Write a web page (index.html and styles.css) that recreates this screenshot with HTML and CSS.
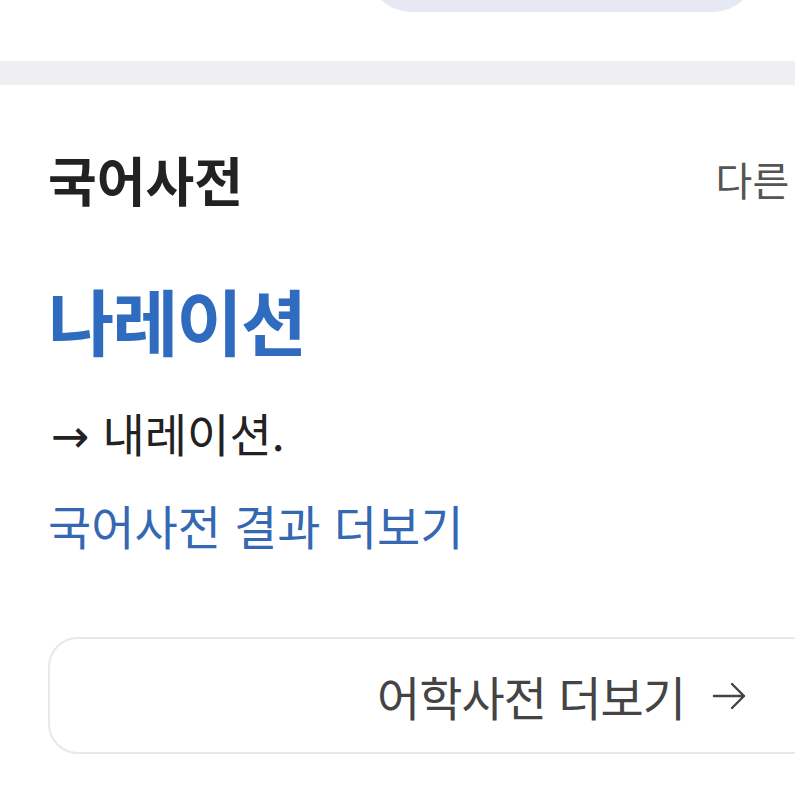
FILE: index.html
```html
<!DOCTYPE html>
<html lang="ko">
<head>
<meta charset="utf-8">
<link rel="stylesheet" href="styles.css">
</head>
<body>
<div class="page">
  <div class="top">
    <div class="pill"></div>
  </div>
  <div class="divider"></div>
  <section class="dict">
    <div class="dict-head">
      <h2 class="dict-title">국어사전</h2>
      <a class="other">다른 사전</a>
    </div>
    <div class="entry">나레이션</div>
    <p class="meaning"><span class="ref-arrow">→</span> 내레이션.</p>
    <a class="more-link">국어사전 결과 더보기</a>
    <div class="more-btn">
      <span>어학사전 더보기</span>
      <svg class="arrow" width="36" height="36" viewBox="0 0 36 36"><path d="M3 18 H33 M21 6 L33 18 L21 30" fill="none" stroke="#444" stroke-width="2.4" stroke-linecap="round" stroke-linejoin="round"/></svg>
    </div>
  </section>
</div>
</body>
</html>
```
FILE: styles.css
```css
html, body { margin: 0; padding: 0; background: #fff; }
body { overflow: hidden; width: 795px; height: 795px; }
.page {
  width: 1124px;
  font-family: "Noto Sans CJK KR", "Noto Sans", sans-serif;
}
.top { height: 61px; display: flex; justify-content: center; }
.pill {
  width: 392px;
  height: 60px;
  margin-top: -48px;
  background: #e6e9f4;
  border-radius: 0 0 46px 46px;
}
.divider { height: 24px; background: #efeff1; }
.dict { padding: 0 48px; }
.dict-head { display: flex; justify-content: space-between; align-items: center; padding-top: 62px; }
.dict-title { margin: 0; font-size: 53px; font-weight: 700; color: #222; letter-spacing: 0; line-height: 64px; }
.other { font-size: 40px; color: #555; line-height: 64px; margin-right: 202px; }
.entry { margin-top: 63px; font-size: 72px; font-weight: 700; color: #2f6bbf; letter-spacing: -2px; line-height: 90px; }
.meaning { margin: 40px 0 0; font-size: 46px; color: #222; line-height: 56px; padding-left: 3px; }
.ref-arrow { font-family: "DejaVu Sans", sans-serif; font-size: 46px; }
.more-link { display: block; margin-top: 31px; font-size: 47px; color: #3568b3; line-height: 60px; }
.more-btn {
  margin-top: 82px;
  height: 113px;
  border: 2px solid #e8e8e8;
  border-radius: 30px;
  display: flex;
  align-items: center;
  justify-content: center;
  gap: 26px;
  font-size: 47px;
  color: #444;
  letter-spacing: -1px;
}
```
